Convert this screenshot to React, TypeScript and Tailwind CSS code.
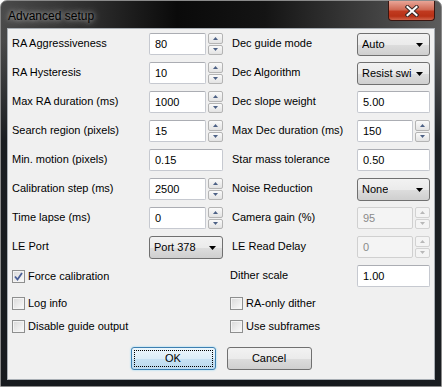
import React from 'react';

const font = { fontFamily: '"Liberation Sans", Arial, sans-serif' };

const Spin = ({ disabled }: { disabled?: boolean }) => (
  <div className="ml-[2px] flex w-[15px] flex-col gap-[1px]">
    {[0, 1].map((i) => (
      <div
        key={i}
        className={`flex h-[10.5px] items-center justify-center rounded-[2px] border ${disabled ? 'border-[#d2d2d2] bg-[#f4f4f4]' : 'border-[#b4b4b4] bg-gradient-to-b from-[#fafafa] to-[#e3e3e3]'}`}
      >
        <svg width="5" height="3" viewBox="0 0 5 3">
          <path d={i === 0 ? 'M0 3 L2.5 0 L5 3 Z' : 'M0 0 L2.5 3 L5 0 Z'} fill={disabled ? '#b8b8b8' : '#4d6185'} />
        </svg>
      </div>
    ))}
  </div>
);

const TextBox = ({ value, w, spin, disabled }: { value: string; w: string; spin?: boolean; disabled?: boolean }) => (
  <div className="flex h-[22px]">
    <div
      className={`${w} flex h-[22px] items-center rounded-[2px] border pl-[5px] ${disabled ? 'border-[#d0d0d0] bg-[#f4f4f4] text-[#8a8a8a]' : 'border-[#c6c9d0] border-t-[#abadb3] bg-white text-black'}`}
    >
      {value}
    </div>
    {spin && <Spin disabled={disabled} />}
  </div>
);

const Combo = ({ value, w }: { value: string; w: string }) => (
  <div
    className={`${w} flex h-[23px] items-center justify-between overflow-hidden rounded-[3px] border border-[#707070] bg-[linear-gradient(#f2f2f2_0%,#ebebeb_50%,#dddddd_51%,#cfcfcf_100%)] pl-[4px] pr-[6px]`}
  >
    <span className="overflow-hidden whitespace-nowrap">{value}</span>
    <svg width="7" height="4" viewBox="0 0 7 4" className="ml-[2px] shrink-0">
      <path d="M0 0 L7 0 L3.5 4 Z" fill="#000" />
    </svg>
  </div>
);

const Check = ({ label, checked }: { label: string; checked?: boolean }) => (
  <div className="flex h-[13px] items-center">
    <div className="flex h-[13px] w-[13px] items-center justify-center border border-[#8e8f8f] bg-white">
      <div className="flex h-[11px] w-[11px] items-center justify-center border border-[#f4f4f4] bg-gradient-to-br from-[#dcdcdc] to-[#f8f8f8]">
        {checked && (
          <svg width="9" height="9" viewBox="0 0 9 9">
            <path d="M1 4.5 L3.5 7.5 L8 1" stroke="#4a5f97" strokeWidth="1.8" fill="none" />
          </svg>
        )}
      </div>
    </div>
    <span className="ml-[3px] leading-[13px]">{label}</span>
  </div>
);

const Label = ({ text, w }: { text: string; w: string }) => (
  <div className={`${w} shrink-0 whitespace-nowrap pt-[3px] leading-[14px]`}>{text}</div>
);

type Cell = { label: string; control: React.ReactNode };

const rows: [Cell, Cell][] = [
  [
    { label: 'RA Aggressiveness', control: <TextBox value="80" w="w-[57px]" spin /> },
    { label: 'Dec guide mode', control: <Combo value="Auto" w="w-[73px]" /> },
  ],
  [
    { label: 'RA Hysteresis', control: <TextBox value="10" w="w-[57px]" spin /> },
    { label: 'Dec Algorithm', control: <Combo value="Resist swi" w="w-[73px]" /> },
  ],
  [
    { label: 'Max RA duration (ms)', control: <TextBox value="1000" w="w-[57px]" spin /> },
    { label: 'Dec slope weight', control: <TextBox value="5.00" w="w-[73px]" /> },
  ],
  [
    { label: 'Search region (pixels)', control: <TextBox value="15" w="w-[57px]" spin /> },
    { label: 'Max Dec duration (ms)', control: <TextBox value="150" w="w-[56px]" spin /> },
  ],
  [
    { label: 'Min. motion (pixels)', control: <TextBox value="0.15" w="w-[74px]" /> },
    { label: 'Star mass tolerance', control: <TextBox value="0.50" w="w-[73px]" /> },
  ],
  [
    { label: 'Calibration step (ms)', control: <TextBox value="2500" w="w-[57px]" spin /> },
    { label: 'Noise Reduction', control: <Combo value="None" w="w-[73px]" /> },
  ],
  [
    { label: 'Time lapse (ms)', control: <TextBox value="0" w="w-[57px]" spin /> },
    { label: 'Camera gain (%)', control: <TextBox value="95" w="w-[56px]" spin disabled /> },
  ],
  [
    { label: 'LE Port', control: <Combo value="Port 378" w="w-[74px]" /> },
    { label: 'LE Read Delay', control: <TextBox value="0" w="w-[56px]" spin disabled /> },
  ],
];

export default function App() {
  return (
    <div className="h-[387px] w-[442px] bg-white" style={font}>
      <div className="relative flex h-[387px] w-[442px] flex-col rounded-t-[7px] border border-[#8a8a8a] bg-[linear-gradient(180deg,rgba(0,0,0,0)_0px,rgba(0,0,0,0)_40px,rgba(18,22,26,0.85)_140px,rgba(18,22,26,0.9)_100%),linear-gradient(90deg,#4a4a4a_0%,#2e2e2e_20%,#0a0a0a_40%,#141414_60%,#3c3c3c_82%,#5c5c5c_100%)] px-[6px] pb-[6px] text-[11px] text-black">
        {/* title bar */}
        <div className="h-[27px] shrink-0 pl-[1px] pt-[6px]">
          <span className="text-[12px] [text-shadow:0_0_8px_rgba(255,255,255,0.6),0_0_4px_rgba(255,255,255,0.5)]">
            Advanced setup
          </span>
        </div>
        <div className="absolute right-[6px] top-0 flex h-[20px] w-[47px] items-center justify-center rounded-b-[4px] border border-t-0 border-[#3a1510] bg-[linear-gradient(#e9a597_0%,#d06a55_45%,#c0391f_55%,#b83116_80%,#d0634a_100%)]">
          <svg width="14" height="12" viewBox="0 0 14 12">
            <path d="M2.5 2 L11.5 10 M11.5 2 L2.5 10" stroke="#3a2a28" strokeWidth="4" strokeLinecap="square" />
            <path d="M2.5 2 L11.5 10 M11.5 2 L2.5 10" stroke="#ffffff" strokeWidth="2" strokeLinecap="square" />
          </svg>
        </div>

        {/* client area */}
        <div className="flex flex-1 flex-col border border-[#a8aeb4] bg-[#f0f0f0] pt-[4px]">
          {rows.map(([l, r], i) => (
            <div key={i} className="mb-[7px] flex h-[22px]">
              <div className="flex w-[220px] pl-[4px]">
                <Label text={l.label} w="w-[137px]" />
                {l.control}
              </div>
              <div className="flex pl-[4px]">
                <Label text={r.label} w="w-[125px]" />
                {r.control}
              </div>
            </div>
          ))}
          <div className="flex h-[22px]">
            <div className="flex w-[220px] items-center pl-[4px]">
              <Check label="Force calibration" checked />
            </div>
            <div className="flex pl-[2px]">
              <Label text="Dither scale" w="w-[127px]" />
              <TextBox value="1.00" w="w-[73px]" />
            </div>
          </div>
          <div className="mt-[10px] flex">
            <div className="w-[220px] pl-[4px]">
              <Check label="Log info" />
            </div>
            <div className="pl-[2px]">
              <Check label="RA-only dither" />
            </div>
          </div>
          <div className="mt-[10px] flex">
            <div className="w-[220px] pl-[4px]">
              <Check label="Disable guide output" />
            </div>
            <div className="pl-[2px]">
              <Check label="Use subframes" />
            </div>
          </div>
          <div className="mt-[14px] flex justify-center gap-[11px]">
            <div className="flex h-[23px] w-[85px] items-center justify-center rounded-[3px] border border-[#3c7fb1] bg-[linear-gradient(#ecf6fc_0%,#dcedf8_50%,#c8e2f3_51%,#bcdaef_100%)] p-[2px] shadow-[0_0_2px_#7fd0f5]">
              <div className="flex h-full w-full items-center justify-center border border-dotted border-black">
                OK
              </div>
            </div>
            <div className="flex h-[23px] w-[85px] items-center justify-center rounded-[3px] border border-[#707070] bg-[linear-gradient(#f2f2f2_0%,#ebebeb_50%,#dddddd_51%,#cfcfcf_100%)]">
              Cancel
            </div>
          </div>
        </div>
      </div>
    </div>
  );
}
